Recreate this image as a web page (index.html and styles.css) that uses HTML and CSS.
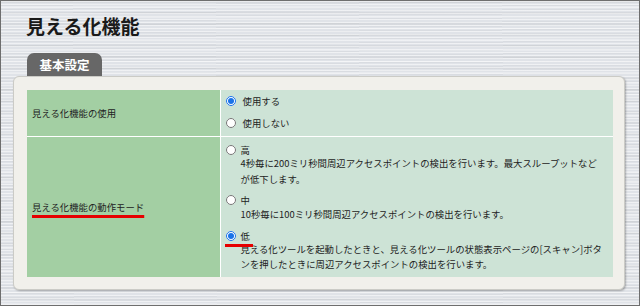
FILE: index.html
```html
<!DOCTYPE html>
<html lang="ja">
<head>
  <meta charset="UTF-8" />
  <meta name="viewport" content="width=device-width, initial-scale=1.0" />
  <title>見える化機能</title>
  <link rel="stylesheet" href="styles.css">
</head>
<body>
  <div class="screen">
    <h1 class="page-title">見える化機能</h1>

    <!-- Tab header -->
    <div class="tabs">
      <span class="tab">基本設定</span>
    </div>

    <!-- Settings panel -->
    <div class="panel">
      <table class="settings">
        <tr class="row-use">
          <td class="label">見える化機能の使用</td>
          <td class="value">
            <label class="option wide"><input type="radio" name="use" checked> 使用する</label>
            <label class="option wide"><input type="radio" name="use"> 使用しない</label>
          </td>
        </tr>
        <tr class="row-mode">
          <td class="label"><span class="marked">見える化機能の動作モード</span></td>
          <td class="value">
            <div class="mode">
              <label class="option"><input type="radio" name="mode">高</label>
              <p class="desc">4秒毎に200ミリ秒間周辺アクセスポイントの検出を行います。最大スループットなど<br>が低下します。</p>
            </div>
            <div class="mode">
              <label class="option"><input type="radio" name="mode">中</label>
              <p class="desc">10秒毎に100ミリ秒間周辺アクセスポイントの検出を行います。</p>
            </div>
            <div class="mode">
              <label class="option pick"><input type="radio" name="mode" checked>低</label>
              <p class="desc">見える化ツールを起動したときと、見える化ツールの状態表示ページの[スキャン]ボタ<br>ンを押したときに周辺アクセスポイントの検出を行います。</p>
            </div>
          </td>
        </tr>
      </table>
    </div>
  </div>
</body>
</html>
```

FILE: styles.css
```css
/* Global styles */
html, body {
  margin: 0;
  padding: 0;
  overflow: hidden;
}
body {
  font-family: "Noto Sans CJK JP", "Noto Sans", sans-serif;
  color: #222;
}

/* Brushed metal backdrop */
.screen {
  width: 640px;
  height: 306px;
  box-sizing: border-box;
  border: 1px solid #6e6e6e;
  background-color: #e0e3e8;
  background-image:
    repeating-linear-gradient(180deg, rgba(255,255,255,0.5) 0 1px, transparent 1px 3px),
    repeating-linear-gradient(180deg, rgba(0,0,0,0.045) 0 2px, transparent 2px 5px, rgba(255,255,255,0.3) 5px 6px, transparent 6px 11px),
    repeating-linear-gradient(179.6deg, rgba(0,0,0,0.03) 0 1px, transparent 1px 4px);
}

.page-title {
  margin: 0;
  padding: 13px 0 0 25px;
  font-size: 19px;
  line-height: 24px;
  font-weight: bold;
  color: #1a1a1a;
}

/* Tab */
.tabs {
  display: flex;
  margin-top: 15px;
  padding-left: 26px;
  height: 23px;
}
.tab {
  width: 75px;
  height: 23px;
  line-height: 23px;
  text-align: center;
  background: #676767;
  color: #fff;
  font-size: 12.5px;
  font-weight: bold;
  border-radius: 7px 7px 0 0;
}

/* Panel holding the table */
.panel {
  margin-left: 12px;
  width: 612px;
  box-sizing: border-box;
  padding: 13px 12px 12px 13px;
  background: #f1f0eb;
  border: 1px solid #cbcbc6;
  border-radius: 6px;
  box-shadow: 1px 1px 2px rgba(0,0,0,0.28);
}

table.settings {
  width: 586px;
  border-collapse: collapse;
  border-spacing: 0;
  font-size: 9.4px;
}
.settings td {
  padding: 0;
  vertical-align: middle;
}
.settings td.label {
  width: 193px;
  padding-left: 5px;
  box-sizing: border-box;
  background: #a3cfa3;
  border-right: 1px solid #fff;
}
.settings td.value {
  background: #cde3d6;
  padding: 0 5px;
}
.row-use td {
  height: 44px;
  border-bottom: 1px solid #fff;
}
.row-use td.value {
  padding-bottom: 2px;
}
.row-mode td {
  height: 132px;
}
.row-mode td.value {
  padding-top: 5px;
  padding-bottom: 3px;
}

/* Radio options */
.option {
  display: flex;
  align-items: center;
  gap: 5px;
  height: 13px;
}
.option.wide {
  height: 22px;
  gap: 7px;
}
.option input {
  width: 10px;
  height: 10px;
  margin: 0;
  accent-color: #1a73e8;
}
.mode + .mode {
  margin-top: 7px;
}
.desc {
  margin: 0 0 0 15px;
  line-height: 15.3px;
  white-space: nowrap;
}

/* Red annotation marks */
.marked {
  text-decoration: underline 3px #e60000;
  text-underline-offset: 4px;
}
.option.pick {
  position: relative;
  width: max-content;
}
.option.pick::after {
  content: "";
  position: absolute;
  left: -1px;
  right: -3px;
  bottom: -5px;
  height: 3px;
  background: #e60000;
}
```
